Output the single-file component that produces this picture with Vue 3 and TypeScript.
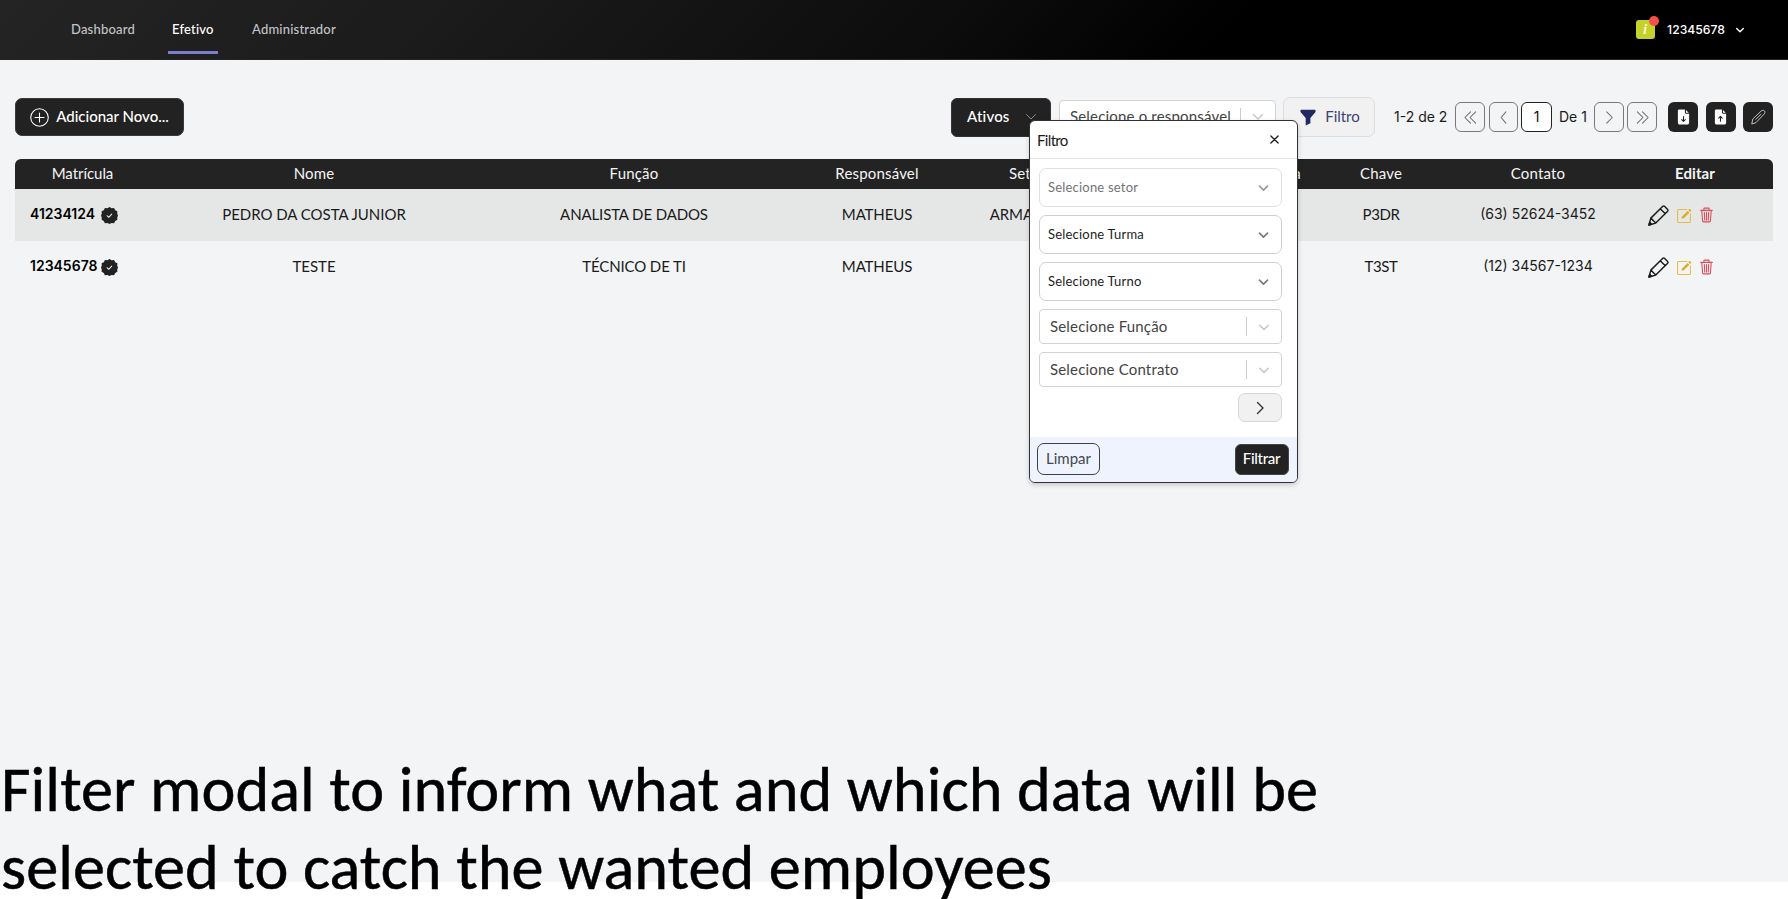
<script setup lang="ts">
interface Employee {
  matricula: string
  nome: string
  funcao: string
  responsavel: string
  setor: string
  chave: string
  contato: string
}

const navItems = [
  { label: 'Dashboard', active: false },
  { label: 'Efetivo', active: true },
  { label: 'Administrador', active: false },
]

const columns = ['Matrícula', 'Nome', 'Função', 'Responsável', 'Setor', '', 'Turma', 'Chave', 'Contato', 'Editar']

const employees: Employee[] = [
  { matricula: '41234124', nome: 'PEDRO DA COSTA JUNIOR', funcao: 'ANALISTA DE DADOS', responsavel: 'MATHEUS', setor: 'ARMAZÉM', chave: 'P3DR', contato: '(63) 52624-3452' },
  { matricula: '12345678', nome: 'TESTE', funcao: 'TÉCNICO DE TI', responsavel: 'MATHEUS', setor: '', chave: 'T3ST', contato: '(12) 34567-1234' },
]

const selects = [
  { label: 'Selecione setor', disabled: true },
  { label: 'Selecione Turma', disabled: false },
  { label: 'Selecione Turno', disabled: false },
]

const comboboxes = ['Selecione Função', 'Selecione Contrato']
</script>

<template>
  <div class="page">
    <header class="topbar">
      <nav class="nav">
        <a v-for="item in navItems" :key="item.label" class="nav-link" :class="{ active: item.active }">{{ item.label }}</a>
      </nav>
      <div class="account">
        <span class="info">i<span class="dot"></span></span>
        <span class="user">12345678</span>
        <svg class="caret" viewBox="0 0 10 10"><path d="M1.700 3.500L5 6.800l3.300-3.300" /></svg>
      </div>
    </header>

    <main class="content">
      <div class="toolbar">
        <button class="add">
          <svg viewBox="0 0 16 16"><circle cx="8" cy="8" r="7.400" /><path d="M8 4.200v7.600M4.200 8h7.600" /></svg>
          <span>Adicionar Novo...</span>
        </button>
        <div class="tools">
          <button class="status"><span>Ativos</span><svg viewBox="0 0 12 12"><path d="M1.500 3.500L6 8l4.500-4.500" /></svg></button>
          <div class="combo owner">
            <span>Selecione o responsável</span><i class="sep"></i>
            <svg viewBox="0 0 12 12"><path d="M1.500 3.500L6 8l4.500-4.500" /></svg>
          </div>
          <button class="filter">
            <svg viewBox="0 0 16 16"><path d="M.5 1.200C.5.600.900.200 1.500.200h13c.6 0 1 .4 1 1v1.400L10.400 8.600v5.200L5.700 15.900V8.600L.5 2.600z" /></svg>
            <span>Filtro</span>
          </button>
          <span class="range">1-2 de 2</span>
          <div class="pager">
            <button><svg viewBox="0 0 16 16"><path d="M8 2L2 8l6 6M13.500 2l-6 6 6 6" /></svg></button>
            <button class="single prev"><svg viewBox="0 0 16 16"><path d="M10.500 2l-5 6 5 6" /></svg></button>
            <button class="current">1</button>
            <span class="total">De 1</span>
            <button class="single next"><svg viewBox="0 0 16 16"><path d="M5 2l6 6-6 6" /></svg></button>
            <button class="last"><svg viewBox="0 0 16 16"><path d="M2.500 2l6 6-6 6M8 2l6 6-6 6" /></svg></button>
          </div>
          <div class="actions">
            <button><svg viewBox="0 0 16 16"><path class="sheet" d="M3.500 0h6v3.200c0 .7.500 1.200 1.200 1.200H14V14c0 1.200-.8 2-2 2H4c-1.200 0-2-.8-2-2V1.500C2 .6 2.600 0 3.500 0zM10.600.4l3 3h-3z" /><path class="mark" d="M8 7.500v5M6.100 10.800L8 12.700l1.900-1.900" /></svg></button>
            <button><svg viewBox="0 0 16 16"><path class="sheet" d="M3.500 0h6v3.200c0 .7.500 1.200 1.200 1.200H14V14c0 1.200-.8 2-2 2H4c-1.200 0-2-.8-2-2V1.500C2 .6 2.600 0 3.500 0zM10.600.4l3 3h-3z" /><path class="mark" d="M8 12.500v-5M6.100 9.200L8 7.300l1.900 1.900" /></svg></button>
            <button><svg viewBox="0 0 16 16"><path class="pen" d="M.9 15.100l1-5L10.900 1.600c1.100-1 2.500-1 3.400-.1.900.9.800 2.300-.2 3.300L5.600 13.700zM10.500 5.200l-5.300 5.300" /></svg></button>
          </div>
        </div>
      </div>

      <section class="table">
        <div class="row head">
          <span v-for="(c, i) in columns" :key="i" :class="{ strong: c === 'Editar', tight: c === 'Matrícula' }">{{ c }}</span>
        </div>
        <div v-for="e in employees" :key="e.matricula" class="row">
          <span class="id">
            <b>{{ e.matricula }}</b>
            <svg viewBox="0 0 16 16">
              <path class="seal" d="M8 0l2 1.100 2.300-.1 1.100 2 2 1.100-.1 2.300L16 8l-.7 1.900.1 2.200-2 1.100-1.100 2-2.300-.1L8 16l-2-.9-2.300.1-1.100-2-2-1.100.1-2.200L0 8l.7-1.600-.1-2.300 2-1.100 1.100-2L6 1.100z" />
              <path class="tick" d="M5.700 8.200l1.600 1.500 2.800-3" />
            </svg>
          </span>
          <span class="name">{{ e.nome }}</span>
          <span>{{ e.funcao }}</span>
          <span>{{ e.responsavel }}</span>
          <span>{{ e.setor }}</span>
          <span></span>
          <span></span>
          <span class="key">{{ e.chave }}</span>
          <span class="phone">{{ e.contato }}</span>
          <span class="edit">
            <svg class="pencil" viewBox="0 0 20 20"><path d="M.9 19.100l1.800-6.600L14.100 1.300c.5-.5 1.100-.5 1.600 0l3 3c.5.500.5 1.100 0 1.600L7.400 17.200zM11.800 3.700l4.500 4.500M2.700 12.500l4.700 4.700" /><path class="tip" d="M.9 19.100l.7-2.600 1.900 1.900z" /></svg>
            <svg class="compose" viewBox="0 0 16 16"><path d="M10.500 1.700H1.700C1 1.700.6 2.100.6 2.700v11.600c0 .7.400 1.100 1.100 1.100h11.600c.6 0 1-.4 1-1.100V6.500" /><path class="nib" d="M4.800 11.500l.5-2.400 6-6 1.900 1.900-6 6zM12 2.400L13.500.9l1.900 1.900-1.500 1.500z" /></svg>
            <svg class="trash" viewBox="0 0 14 16"><path d="M.7 3h12.600M4.200 3V1.300c0-.4.300-.7.700-.7h4.200c.4 0 .7.300.7.700V3M1.900 3l.9 11.400c0 .6.500 1 1.100 1h6.200c.6 0 1.100-.4 1.100-1L12.100 3M4.700 5.300l.4 8M7 5.300v8M9.300 5.300l-.4 8" /></svg>
          </span>
        </div>
      </section>
    </main>

    <div class="modal">
      <div class="modal-head">
        <span>Filtro</span>
        <svg viewBox="0 0 10 10"><path d="M1 1l8 8M9 1L1 9" /></svg>
      </div>
      <div class="modal-body">
        <div v-for="s in selects" :key="s.label" class="select" :class="{ disabled: s.disabled }">
          <span>{{ s.label }}</span><svg viewBox="0 0 12 12"><path d="M2.300 4.700L6 8.400l3.700-3.700" /></svg>
        </div>
        <div v-for="c in comboboxes" :key="c" class="combo">
          <span>{{ c }}</span><i class="sep"></i><svg viewBox="0 0 12 12"><path d="M1.700 4.200L6 8.400l4.300-4.200" /></svg>
        </div>
        <button class="more"><svg viewBox="0 0 12 14"><path d="M3.500 1.500L9 7l-5.500 5.500" /></svg></button>
      </div>
      <div class="modal-foot">
        <button class="clear"><span>Limpar</span></button>
        <button class="apply"><span>Filtrar</span></button>
      </div>
    </div>

    <p class="caption">Filter modal to inform what and which data will be<br />selected to catch the wanted employees</p>
  </div>
</template>

<style>
body { margin: 0; background: #fff; }
</style>

<style scoped>
.page { position: relative; width: 1788px; height: 899px; overflow: hidden; background: #fff; color: #1a1a1a; font: 15px/20px Lato, "Liberation Sans", sans-serif; letter-spacing: .18px; }
.page * { box-sizing: border-box; }
button { font: inherit; letter-spacing: inherit; color: inherit; padding: 0; margin: 0; display: flex; align-items: center; justify-content: center; flex: none; }
button span, .combo span { padding-bottom: 2px; }
svg { display: block; flex: none; fill: none; stroke: currentColor; stroke-linecap: round; stroke-linejoin: round; }

.topbar { height: 60px; display: flex; justify-content: space-between; background: linear-gradient(135deg, #242424 0%, #1b1b1b 25%, #0c0c0c 53%, #000 68%); border-bottom: 1px solid #222427; }
.nav { display: flex; padding-left: 67px; font-size: 13px; font-weight: 500; letter-spacing: .2px; color: #c3c4c8; }
.nav-link { height: 54px; padding: 7px 4px 0; display: flex; align-items: center; border-bottom: 3px solid transparent; }
.nav-link.active { width: 50px; margin: 0 30px 0 29px; color: #fff; border-color: #7c7ec9; }
.account { display: flex; align-items: center; padding: 0 43px 0 0; color: #fff; }
.info { position: relative; width: 19px; height: 19px; border-radius: 3px; background: #c5d22b; color: #f5f8c8; font: italic 700 15px/19px "Liberation Serif", serif; text-align: center; }
.dot { position: absolute; top: -4px; right: -4px; width: 10px; height: 10px; border-radius: 50%; background: #f5504a; }
.user { margin: 0 10px 0 12.5px; font: 500 12.2px/20px Inter, sans-serif; letter-spacing: 0; }
.caret { width: 10px; height: 10px; stroke-width: 1.4; }

.content { height: 822px; padding: 37px 15px 0; background: #f2f4f6; }
.toolbar { height: 40px; display: flex; align-items: center; justify-content: space-between; }
.add { width: 169px; height: 38px; border: 1px solid #3a3a3a; border-radius: 7px; background: #222; color: #fff; gap: 7px; font-weight: 500; letter-spacing: 0; }
.add svg { width: 19px; height: 19px; stroke-width: .9; }
.tools { display: flex; align-items: center; }
.status { width: 100px; height: 39px; border: 1px solid #333; border-radius: 6px; background: #222; color: #fff; font-weight: 500; justify-content: space-between; padding: 0 13px 0 15px; }
.status svg { width: 12px; height: 12px; color: #85878b; }
.combo { height: 35px; display: flex; align-items: center; border: 1px solid #d2d2d2; border-radius: 4px; background: #fff; color: #444; padding: 0 11px 0 10px; }
.combo .sep { width: 1px; height: 19px; margin: 0 11px 0 auto; background: #ccc; }
.combo svg { width: 12px; height: 12px; stroke-width: 1.5; color: #c8c8c8; }
.owner { width: 217px; margin: 0 7px 0 8px; padding-right: 11px; }
.filter { width: 92px; height: 40px; border: 1px solid #dcdde0; border-radius: 7px; background: #f1f1f2; gap: 9px; padding-left: 2px; color: #3c4273; letter-spacing: -.05px; }
.filter svg { width: 16px; height: 17px; fill: #202a60; stroke: none; }
.range { width: 80px; padding-left: 19px; white-space: nowrap; font: 14px/20px Inter, sans-serif; letter-spacing: 0; }
.pager { display: flex; align-items: center; font: 14px/20px Inter, sans-serif; letter-spacing: 0; }
.pager button { width: 30px; height: 30px; border: 1px solid #77797c; border-radius: 6px; background: transparent; color: #6b6d70; }
.pager .single { width: 29px; }
.pager .prev { margin: 0 3px 0 4px; }
.pager .current { width: 31px; background: #fff; border-color: #222; color: #111; }
.pager .total { width: 42px; padding-left: 7px; }
.pager .next { width: 30px; margin-right: 3px; }
.pager svg { width: 15px; height: 15px; stroke-width: 1.1; }
.actions { display: flex; gap: 7.5px; margin-left: 11px; }
.actions button { width: 30px; height: 30px; border: 0; border-radius: 6px; background: #222; color: #ddd; }
.actions svg { width: 15px; height: 16px; }
.sheet { fill: #fff; stroke: none; }
.mark { stroke: #222; stroke-width: 1.1; }
.pen { stroke-width: .9; }

.table { margin-top: 22px; }
.row { display: grid; grid-template-columns: 135px 328px 312px 174px 126px 139px 102px 100px 214px 100px; height: 52px; align-items: center; text-align: center; letter-spacing: -.12px; padding-bottom: 2px; }
.row:nth-child(2) { background: #e5e7e6; }
.row.head { height: 30px; border-radius: 6px 6px 0 0; background: #232323; color: #f5f5f5; letter-spacing: .18px; }
.head .strong { font-weight: 700; letter-spacing: .1px; }
.head .tight { letter-spacing: -.05px; }
.id { display: flex; align-items: center; padding-left: 15px; }
.id b { width: 70.5px; text-align: left; font: 600 14px/20px Inter, sans-serif; letter-spacing: 0; color: #000; }
.id svg { width: 17px; height: 17px; margin-top: 2px; }
.seal { fill: #222; stroke: none; }
.tick { stroke: #e8e8e8; stroke-width: 1; }
.name { letter-spacing: -.02px; }
.key { letter-spacing: -.4px; }
.phone { font: 14px/20px Inter, sans-serif; letter-spacing: 0; }
.edit { display: flex; align-items: center; padding: 2px 0 0 3px; }
.pencil { width: 21px; height: 21px; stroke-width: 1.35; color: #1a1a1a; }
.tip { fill: #1a1a1a; }
.compose { width: 15px; height: 15px; margin-left: 8px; stroke-width: 1.1; color: #e5bd43; }
.nib { fill: #dfad22; stroke: none; }
.trash { width: 13px; height: 16px; margin-left: 8px; stroke-width: 1.15; color: #dc4b57; }

.modal { position: absolute; left: 1029px; top: 120px; width: 269px; height: 363px; display: flex; flex-direction: column; border: 1px solid #303236; border-radius: 6px; background: #fff; box-shadow: 0 2px 5px rgb(0 0 0 / 18%); overflow: hidden; }
.modal-head { height: 38px; display: flex; align-items: center; justify-content: space-between; padding: 0 18px 0 7px; border-bottom: 1px solid #e2e4e7; letter-spacing: -.65px; }
.modal-head svg { width: 9px; height: 9px; stroke-width: 1.5; color: #222; }
.modal-body { flex: 1; display: flex; flex-direction: column; padding: 9px 15px 0 9px; }
.select { height: 39px; margin-bottom: 8px; display: flex; align-items: center; justify-content: space-between; padding: 0 11px 1px 8px; border: 1px solid #cfcfd1; border-radius: 7px; font-size: 13px; letter-spacing: .2px; color: #222; }
.select svg { width: 13px; height: 13px; stroke-width: 1.5; color: #77797c; }
.select.disabled { border-color: #e0e0e2; color: #737373; }
.select.disabled svg { color: #999; }
.modal-body .combo { margin-bottom: 8px; }
.more { width: 44px; height: 29px; margin-top: -2px; align-self: flex-end; border: 1px solid #d5d5d7; border-radius: 7px; background: #f1f1f1; color: #333; }
.more svg { width: 12px; height: 14px; stroke-width: 1.4; }
.modal-foot { height: 45px; display: flex; align-items: center; justify-content: space-between; padding: 0 8.5px 1px 7px; background: #eff3fd; }
.clear { width: 63px; height: 32px; border: 1px solid #3c404d; border-radius: 7px; background: transparent; color: #444850; letter-spacing: 0; }
.apply { width: 54px; height: 31px; border: 1px solid #444; border-radius: 6px; background: #222; color: #fff; font-weight: 500; letter-spacing: -.28px; }

.caption { position: absolute; left: 1px; top: 750px; margin: 0; white-space: nowrap; color: #000; font: 64.3px/78px Carlito, Lato, sans-serif; letter-spacing: .03px; -webkit-text-stroke: .5px #000; }
</style>
